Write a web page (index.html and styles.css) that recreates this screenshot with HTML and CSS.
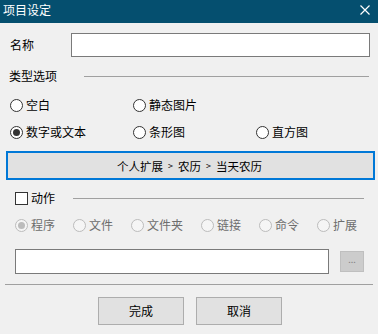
FILE: index.html
```html
<!DOCTYPE html>
<html lang="zh-CN">
<head>
    <meta charset="UTF-8">
    <title>项目设定</title>
    <link rel="stylesheet" href="styles.css">
</head>
<body>
    <div class="dialog">
        <div class="titlebar">
            <span class="title">项目设定</span>
            <svg class="close" width="10" height="10" viewBox="0 0 10 10">
                <path d="M0.5 0.5 L9.5 9.5 M9.5 0.5 L0.5 9.5" stroke="#fff" stroke-width="1.2"/>
            </svg>
        </div>

        <div class="name-row">
            <span class="name-label">名称</span>
            <div class="text-box"></div>
        </div>

        <div class="group-head">
            <span>类型选项</span>
            <div class="rule"></div>
        </div>

        <div class="type-grid">
            <div class="opt"><span class="radio"></span>空白</div>
            <div class="opt"><span class="radio"></span>静态图片</div>
            <div class="opt"></div>
            <div class="opt"><span class="radio checked"></span>数字或文本</div>
            <div class="opt"><span class="radio"></span>条形图</div>
            <div class="opt"><span class="radio"></span>直方图</div>
        </div>

        <div class="path-btn">
            <span>个人扩展</span><span class="sep">&gt;</span><span>农历</span><span class="sep">&gt;</span><span>当天农历</span>
        </div>

        <div class="action-head">
            <span class="check"></span>
            <span class="action-label">动作</span>
            <div class="rule"></div>
        </div>

        <div class="action-opts">
            <div class="opt dim w58"><span class="radio checked"></span>程序</div>
            <div class="opt dim w58"><span class="radio"></span>文件</div>
            <div class="opt dim w70"><span class="radio"></span>文件夹</div>
            <div class="opt dim w58"><span class="radio"></span>链接</div>
            <div class="opt dim w58"><span class="radio"></span>命令</div>
            <div class="opt dim"><span class="radio"></span>扩展</div>
        </div>

        <div class="cmd-row">
            <div class="cmd-box"></div>
            <div class="browse">...</div>
        </div>

        <div class="separator"></div>

        <div class="footer">
            <div class="btn">完成</div>
            <div class="btn">取消</div>
        </div>
    </div>
</body>
</html>
```

FILE: styles.css
```css
* {
    margin: 0;
    padding: 0;
    box-sizing: border-box;
}

body {
    font-family: "Noto Sans CJK SC", "Noto Sans", sans-serif;
    font-size: 12px;
    line-height: 16px;
    color: #000;
    background: #f0f0f0;
}

.dialog {
    width: 378px;
    height: 334px;
    overflow: hidden;
}

.titlebar {
    height: 23px;
    background: #054f6f;
    color: #fff;
    display: flex;
    align-items: center;
    justify-content: space-between;
    padding: 0 8px 0 3px;
}

.title {
    margin-top: -3px;
}

.close {
    margin-top: -4px;
}

.name-row {
    display: flex;
    align-items: center;
    margin-top: 10px;
    padding: 0 8px 0 10px;
}

.name-label {
    width: 61px;
}

.text-box {
    flex: 1;
    height: 24px;
    background: #fff;
    border: 1px solid #7a7a7a;
}

.group-head {
    display: flex;
    align-items: center;
    margin-top: 11px;
    padding: 0 9px;
    height: 16px;
}

.group-head span {
    width: 75px;
}

.rule {
    flex: 1;
    height: 1px;
    background: #a0a0a0;
}

.type-grid {
    display: grid;
    grid-template-columns: 123px 123px 1fr;
    row-gap: 7px;
    margin-top: 11px;
    padding-left: 10px;
}

.opt {
    display: flex;
    align-items: center;
    gap: 3px;
    height: 20px;
}

.radio {
    width: 13px;
    height: 13px;
    border: 1px solid #333;
    border-radius: 50%;
    background: #fff;
    display: flex;
    align-items: center;
    justify-content: center;
}

.radio.checked::after {
    content: '';
    width: 7px;
    height: 7px;
    border-radius: 50%;
    background: #333;
}

.path-btn {
    margin: 9px 3px 0 6px;
    height: 29px;
    border: 2px solid #0078d7;
    background: #e1e1e1;
    display: flex;
    align-items: center;
    justify-content: center;
    font-size: 11.5px;
    padding-right: 2px;
}

.path-btn .sep {
    font-size: 9px;
    margin: 0 5px;
}

.action-head {
    display: flex;
    align-items: center;
    height: 16px;
    margin-top: 10px;
    padding: 0 14px 0 15px;
}

.check {
    width: 13px;
    height: 13px;
    border: 1px solid #333;
    background: #fff;
}

.action-label {
    margin-left: 3px;
    width: 42px;
}

.action-opts {
    display: flex;
    margin-top: 9px;
    padding-left: 15px;
}

.w58 {
    width: 58px;
}

.w70 {
    width: 70px;
}

.opt.dim {
    color: #6d6d6d;
}

.opt.dim .radio {
    border-color: #bcbcbc;
    background: #f5f5f5;
}

.opt.dim .radio.checked::after {
    background: #bcbcbc;
}

.cmd-row {
    display: flex;
    align-items: center;
    margin-top: 14px;
    padding: 0 14px 0 15px;
}

.cmd-box {
    width: 314px;
    height: 25px;
    background: #fff;
    border: 1px solid #7a7a7a;
}

.browse {
    margin-left: 11px;
    width: 24px;
    height: 21px;
    background: #cccccc;
    border: 1px solid #bfbfbf;
    color: #838383;
    font-size: 9px;
    line-height: 16px;
    text-align: center;
}

.separator {
    margin: 10px 5px 0 5px;
    height: 1px;
    background: #a0a0a0;
}

.footer {
    display: flex;
    justify-content: center;
    gap: 12px;
    margin-top: 12px;
    padding-left: 2px;
}

.btn {
    width: 86px;
    height: 28px;
    background: #e1e1e1;
    border: 1px solid #adadad;
    display: flex;
    align-items: center;
    justify-content: center;
}
```
